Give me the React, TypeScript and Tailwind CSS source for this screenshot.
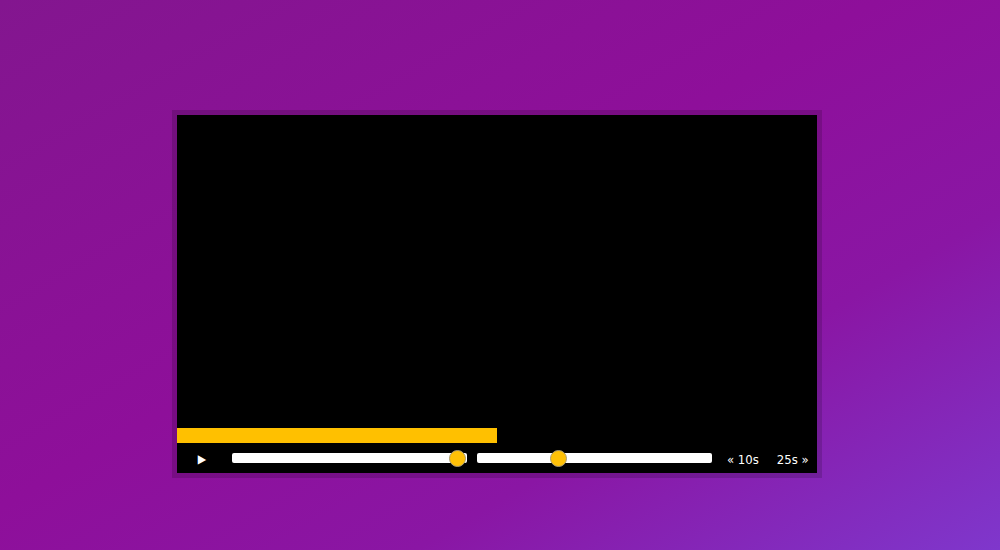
export default function App() {
  const played = 50;
  const progress = 96;
  const volume = 34.5;

  return (
    <div className="w-[1000px] h-[550px] overflow-hidden bg-[linear-gradient(150deg,#83168f_0%,#8e0f9a_45%,#8a16a4_70%,#7f37cc_100%)] pt-[115px] pl-[177px] font-['DejaVu_Sans_Condensed','DejaVu_Sans',sans-serif]">
      <div className="w-[640px] bg-black shadow-[0_0_0_5px_rgba(0,0,0,0.15)]">
        <div className="h-[313px]" />
        <div className="h-[15px]">
          <div className="h-full bg-[#ffc000]" style={{ width: `${played}%` }} />
        </div>
        <div className="h-[30px] flex items-center">
          <button className="ml-[20px] w-[10px] mt-[1px] text-white text-[12px] leading-none">▶</button>
          <div className="ml-[25px] relative w-[235px] h-[10px] bg-white rounded-[2px]">
            <div
              className="absolute top-1/2 w-[17px] h-[17px] -ml-[8.5px] -mt-[8.5px] rounded-full bg-[#ffc107] border border-[#a89a70]"
              style={{ left: `${progress}%` }}
            />
          </div>
          <div className="ml-[10px] relative w-[235px] h-[10px] bg-white rounded-[2px]">
            <div
              className="absolute top-1/2 w-[17px] h-[17px] -ml-[8.5px] -mt-[8.5px] rounded-full bg-[#ffc107] border border-[#a89a70]"
              style={{ left: `${volume}%` }}
            />
          </div>
          <span className="ml-[15px] mt-[2px] text-white text-[13px] leading-none">« 10s</span>
          <span className="ml-[18px] mt-[2px] text-white text-[13px] leading-none">25s »</span>
        </div>
      </div>
    </div>
  );
}
